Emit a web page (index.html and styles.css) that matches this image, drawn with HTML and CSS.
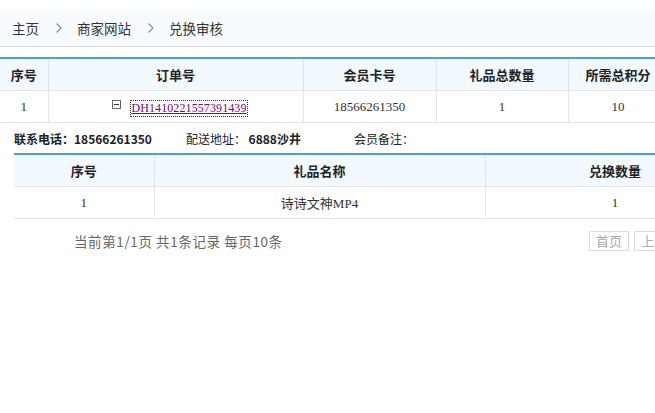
FILE: index.html
```html
<!DOCTYPE html>
<html>
<head>
<meta charset="utf-8">
<link rel="stylesheet" href="styles.css">
</head>
<body>
<div class="crumb">
  <span>主页</span>
  <svg class="chev" width="8" height="12" viewBox="0 0 8 12"><polyline points="1.5,1.5 6,6 1.5,10.5" fill="none" stroke="#888" stroke-width="1.1"/></svg>
  <span>商家网站</span>
  <svg class="chev" width="8" height="12" viewBox="0 0 8 12"><polyline points="1.5,1.5 6,6 1.5,10.5" fill="none" stroke="#888" stroke-width="1.1"/></svg>
  <span>兑换审核</span>
</div>
<div class="wrap">
<table class="grid main">
  <colgroup><col style="width:48px"><col style="width:255px"><col style="width:133px"><col style="width:132px"><col style="width:100px"></colgroup>
  <thead><tr><th>序号</th><th>订单号</th><th>会员卡号</th><th>礼品总数量</th><th>所需总积分</th></tr></thead>
  <tbody><tr><td>1</td><td><span class="order"><span class="toggle"></span><a class="link" href="#">DH1410221557391439</a></span></td><td>18566261350</td><td>1</td><td>10</td></tr></tbody>
</table>
<div class="detail">
  <span class="item b">联系电话：18566261350</span>
  <span class="item addr">配送地址： <b>6888沙井</b></span>
  <span class="item note">会员备注：</span>
</div>
<table class="grid sub">
  <colgroup><col style="width:140px"><col style="width:331px"><col style="width:260px"></colgroup>
  <thead><tr><th>序号</th><th>礼品名称</th><th>兑换数量</th></tr></thead>
  <tbody><tr><td>1</td><td>诗诗文神MP4</td><td>1</td></tr></tbody>
</table>
<div class="pager">
  <span class="info">当前第1/1页 共1条记录 每页10条</span>
  <span class="btns"><span class="btn">首页</span><span class="btn">上一页</span></span>
</div>
</div>
</body>
</html>
```
FILE: styles.css
```css
html, body { margin: 0; padding: 0; background: #fff; }
body { width: 655px; height: 413px; overflow: hidden; font-family: "Noto Sans CJK SC", "Noto Sans", sans-serif; color: #333; }
.crumb { margin-top: 9px; height: 37px; background: #f7fbfe; border-bottom: 1px solid #dcdfe2; display: flex; align-items: center; padding-left: 12px; font-size: 13.5px; color: #333; white-space: nowrap; }
.crumb .chev { margin: 0 14px 0 16px; }
.wrap { padding-top: 10px; width: 800px; }
.grid { border-collapse: collapse; table-layout: fixed; }
.grid th { height: 31px; padding: 0; background: #f2f9ff; border-top: 2px solid #4a9fdc; border-left: 1px solid #e3e3e3; border-right: 1px solid #e3e3e3; border-bottom: 1px solid #e3e3e3; font-size: 13px; font-weight: bold; color: #222; text-align: center; white-space: nowrap; }
.grid td { height: 31px; padding: 0; border: 1px solid #e3e3e3; border-top: none; text-align: center; font-family: "Liberation Serif", "Noto Sans CJK SC", serif; font-size: 13px; color: #333; white-space: nowrap; }
.grid th:first-child, .grid td:first-child { border-left: none; }
.main { width: 668px; }
.order { display: inline-flex; align-items: center; margin-left: 8px; }
.toggle { width: 7px; height: 7px; border: 1px solid #666; position: relative; margin-right: 10px; margin-top: -8px; }
.toggle::after { content: ""; position: absolute; left: 1px; right: 1px; top: 3px; height: 1px; background: #333; }
.link { color: #800080; text-decoration: underline; outline: 1px dotted #333; font-family: "Liberation Serif", serif; font-size: 12px; letter-spacing: 0.1px; }
.detail { height: 30px; display: flex; align-items: center; padding-left: 14px; font-size: 12px; color: #222; white-space: nowrap; }
.detail .b { font-weight: bold; }
.detail .addr { margin-left: 34px; }
.detail .note { margin-left: 53px; }
.sub { margin-left: 14px; width: 731px; }
.pager { display: flex; align-items: center; height: 44px; white-space: nowrap; }
.info { display: inline-block; width: 515px; margin-left: 74px; font-size: 13.5px; letter-spacing: 0.6px; color: #666; }
.btns { display: flex; gap: 5px; }
.btn { display: inline-block; height: 18px; line-height: 18px; padding: 0 6px; border: 1px solid #dcdcdc; font-size: 13px; color: #aaa; }
```
